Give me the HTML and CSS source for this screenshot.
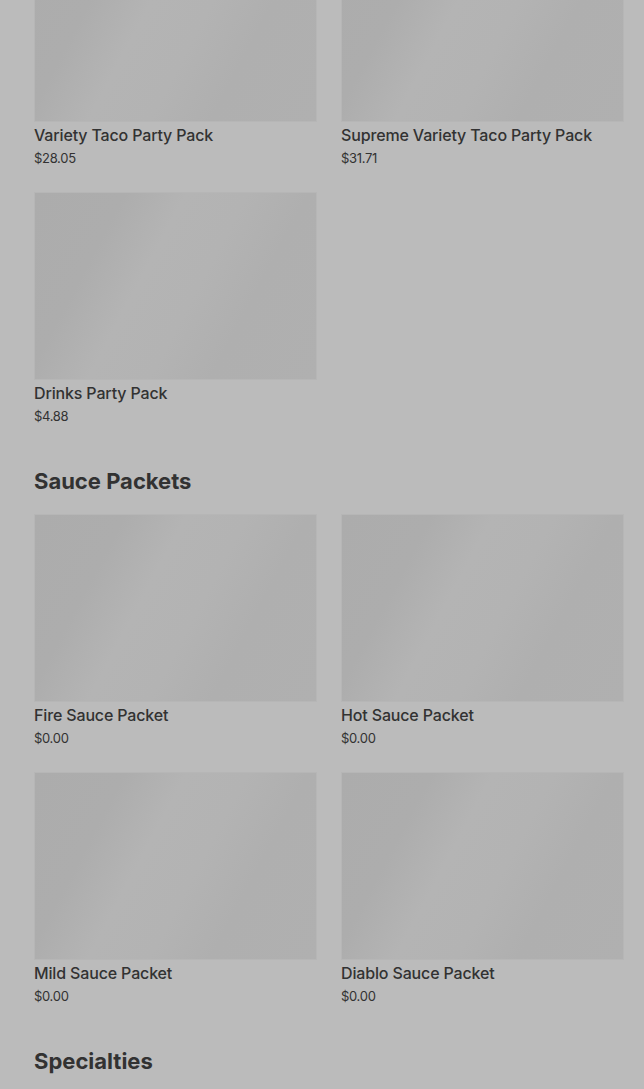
FILE: index.html
```html
<!DOCTYPE html>
<html lang="en">
<head>
<meta charset="utf-8">
<title>Menu</title>
<link rel="stylesheet" href="styles.css">
</head>
<body>
<main class="menu">
  <section class="section section-first">
    <div class="grid">
      <a class="card" href="#"><div class="thumb"></div><div class="name">Variety Taco Party Pack</div><div class="price">$28.05</div></a>
      <a class="card" href="#"><div class="thumb"></div><div class="name">Supreme Variety Taco Party Pack</div><div class="price">$31.71</div></a>
      <a class="card" href="#"><div class="thumb"></div><div class="name">Drinks Party Pack</div><div class="price">$4.88</div></a>
    </div>
  </section>
  <section class="section">
    <h2 class="section-title">Sauce Packets</h2>
    <div class="grid">
      <a class="card" href="#"><div class="thumb"></div><div class="name">Fire Sauce Packet</div><div class="price">$0.00</div></a>
      <a class="card" href="#"><div class="thumb"></div><div class="name">Hot Sauce Packet</div><div class="price">$0.00</div></a>
      <a class="card" href="#"><div class="thumb"></div><div class="name">Mild Sauce Packet</div><div class="price">$0.00</div></a>
      <a class="card" href="#"><div class="thumb"></div><div class="name">Diablo Sauce Packet</div><div class="price">$0.00</div></a>
    </div>
  </section>
  <section class="section">
    <h2 class="section-title">Specialties</h2>
  </section>
</main>
</body>
</html>
```
FILE: styles.css
```css
html, body {
  margin: 0;
  padding: 0;
  background: #bbbbbb;
  overflow: hidden;
}
body {
  font-family: Inter, "Noto Sans", "Liberation Sans", sans-serif;
  color: #323232;
}
.menu {
  margin-top: -66px;
  padding: 0 20px 0 34px;
}
.grid {
  display: grid;
  grid-template-columns: 1fr 1fr;
  column-gap: 24px;
  row-gap: 24px;
}
.card {
  display: block;
  text-decoration: none;
  color: inherit;
}
.thumb {
  height: 188px;
  background: linear-gradient(118deg, #acacac 0%, #adadad 24%, #b4b4b4 40%, #b3b3b3 56%, #afafaf 72%, #b0b0b0 100%);
  box-shadow: inset 0 0 0 1px #b6b6b6;
}
.name {
  margin-top: 3px;
  font-size: 16px;
  line-height: 20px;
  font-weight: 500;
  letter-spacing: -0.15px;
}
.price {
  margin-top: 3px;
  font-size: 13px;
  line-height: 20px;
  font-weight: 400;
  letter-spacing: -0.3px;
}
.section-title {
  margin: 39px 0 17px;
  font-size: 22px;
  line-height: 32px;
  font-weight: 700;
  letter-spacing: 0;
}
```
